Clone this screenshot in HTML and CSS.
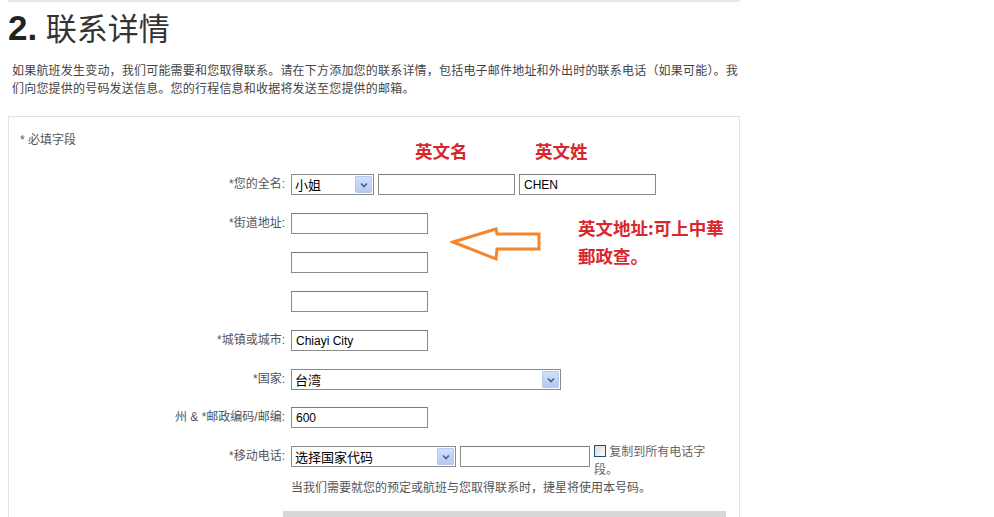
FILE: index.html
```html
<!DOCTYPE html>
<html lang="zh-CN">
<head>
  <meta charset="UTF-8">
  <title>联系详情</title>
  <link rel="stylesheet" href="styles.css">
</head>
<body>
  <div class="page">
    <h1 class="title"><b>2.</b> 联系详情</h1>
    <p class="intro">如果航班发生变动，我们可能需要和您取得联系。请在下方添加您的联系详情，包括电子邮件地址和外出时的联系电话（如果可能）。我们向您提供的号码发送信息。您的行程信息和收据将发送至您提供的邮箱。</p>

    <div class="panel">
      <p class="req">* 必填字段</p>

      <div class="row">
        <label class="lbl">*您的全名:</label>
        <div class="fields">
          <span class="sel w-title">
            <select><option>小姐</option></select>
            <span class="sel-btn"><svg width="8" height="6" viewBox="0 0 8 6"><path d="M1 1.5 L4 4.5 L7 1.5" fill="none" stroke="#4a5f86" stroke-width="1.6"/></svg></span>
          </span>
          <input class="txt" type="text" value="">
          <input class="txt" type="text" value="CHEN">
        </div>
      </div>

      <div class="row">
        <label class="lbl">*街道地址:</label>
        <div class="fields stack">
          <input class="txt" type="text" value="">
          <input class="txt" type="text" value="">
          <input class="txt" type="text" value="">
        </div>
      </div>

      <div class="row">
        <label class="lbl">*城镇或城市:</label>
        <div class="fields">
          <input class="txt" type="text" value="Chiayi City">
        </div>
      </div>

      <div class="row">
        <label class="lbl">*国家:</label>
        <div class="fields">
          <span class="sel w-country">
            <select><option>台湾</option></select>
            <span class="sel-btn"><svg width="8" height="6" viewBox="0 0 8 6"><path d="M1 1.5 L4 4.5 L7 1.5" fill="none" stroke="#4a5f86" stroke-width="1.6"/></svg></span>
          </span>
        </div>
      </div>

      <div class="row row-zip">
        <label class="lbl">州 &amp; *邮政编码/邮编:</label>
        <div class="fields">
          <input class="txt" type="text" value="600">
        </div>
      </div>

      <div class="row">
        <label class="lbl">*移动电话:</label>
        <div class="fields stack-tight">
          <div class="phone">
            <span class="sel w-code">
              <select><option>选择国家代码</option></select>
              <span class="sel-btn"><svg width="8" height="6" viewBox="0 0 8 6"><path d="M1 1.5 L4 4.5 L7 1.5" fill="none" stroke="#4a5f86" stroke-width="1.6"/></svg></span>
            </span>
            <input class="txt w-phone" type="text" value="">
            <span class="copy"><span class="cb"></span> 复制到所有电话字段。</span>
          </div>
          <p class="help">当我们需要就您的预定或航班与您取得联系时，捷星将使用本号码。</p>
        </div>
      </div>

      <div class="bar"></div>
    </div>

    <!-- 手写标注 -->
    <div class="note note-first">英文名</div>
    <div class="note note-last">英文姓</div>
    <div class="note note-addr">英文地址:可上中華<br>郵政查。</div>
    <svg class="arrow" width="94" height="38" viewBox="0 0 94 38">
      <path d="M3 16 L46 3 L47 8 L89 8 L89 23 L47 23 L46 33 Z" fill="none" stroke="#f6862c" stroke-width="3" stroke-linejoin="miter"/>
    </svg>
  </div>
</body>
</html>
```

FILE: styles.css
```css
/* Základ */
body {
  margin: 0 0 0 8px;
  background: #fff;
  font-family: "Liberation Sans", "Noto Sans CJK SC", sans-serif;
  font-size: 12px;
  color: #555;
}

.page {
  position: relative;
  width: 732px;
  border-top: 2px solid #e8e8e8;
}

/* Nadpis */
.title {
  margin: 0;
  padding: 6px 0 0;
  height: 40px;
  line-height: 40px;
  font-size: 31px;
  font-weight: normal;
  color: #333;
}
.title b { font-size: 35px; font-weight: bold; color: #222; }

.intro {
  margin: 14px 0 0 4px;
  width: 730px;
  line-height: 18px;
  letter-spacing: 0.2px;
  color: #444;
}

/* Panel s formulárom */
.panel {
  margin-top: 18px;
  border: 1px solid #e2e2e2;
  border-bottom: 0;
  height: 420px;
}

.req {
  margin: 0;
  padding: 14px 0 0 11px;
  line-height: 18px;
  color: #555;
}

.row {
  display: flex;
  align-items: flex-start;
  gap: 6px;
  margin-top: 18px;
}
.req + .row { margin-top: 25px; }
.row-zip { margin-top: 17px; }

.lbl {
  width: 276px;
  flex-shrink: 0;
  text-align: right;
  line-height: 21px;
  color: #555;
}

.fields {
  display: flex;
  gap: 4px;
}
.fields.stack { flex-direction: column; gap: 18px; }
.fields.stack-tight { flex-direction: column; gap: 0; }

/* Polia */
.txt {
  box-sizing: border-box;
  width: 137px;
  height: 21px;
  margin: 0;
  padding: 0 4px;
  border: 1px solid #8a8a8a;
  border-top-color: #7a7a7a;
  font-family: "Liberation Sans", "Noto Sans CJK SC", sans-serif;
  font-size: 12px;
  color: #000;
  background: #fff;
}
.txt.w-phone { width: 130px; }

.sel {
  position: relative;
  display: inline-block;
  height: 21px;
}
.sel select {
  box-sizing: border-box;
  -webkit-appearance: none;
  appearance: none;
  width: 100%;
  height: 21px;
  margin: 0;
  padding: 0 0 0 3px;
  border: 1px solid #8a8a8a;
  border-radius: 0;
  background: #fff;
  font-family: "Noto Sans CJK SC", sans-serif;
  font-size: 13px;
  color: #000;
}
.sel-btn {
  position: absolute;
  top: 2px;
  right: 2px;
  width: 15px;
  height: 15px;
  border: 1px solid #b8c9f0;
  border-radius: 1px;
  background: linear-gradient(#d3e0fb, #b6c9f3);
  display: flex;
  align-items: center;
  justify-content: center;
  pointer-events: none;
}
.w-title { width: 83px; }
.w-country { width: 270px; }
.w-code { width: 165px; }

/* Telefón */
.phone {
  display: flex;
  align-items: flex-start;
  gap: 4px;
}
.copy {
  display: inline-block;
  width: 116px;
  margin-top: -3px;
  line-height: 18px;
  color: #666;
}
.cb {
  display: inline-block;
  box-sizing: border-box;
  width: 12px;
  height: 12px;
  border: 1px solid #1c5180;
  background: linear-gradient(135deg, #dcdcd7, #fbfbfa);
  vertical-align: -1px;
}

.help {
  margin: 0;
  line-height: 18px;
  color: #555;
}

.bar {
  margin: 14px 0 0 274px;
  width: 443px;
  height: 10px;
  background: #d8d8d8;
}

/* Červené poznámky */
.note {
  position: absolute;
  font-family: "Noto Sans CJK SC", sans-serif;
  font-size: 17.5px;
  font-weight: bold;
  line-height: 28px;
  color: #d8262c;
}
.note-first { left: 407px; top: 135px; }
.note-last { left: 527px; top: 135px; }
.note-addr { left: 570px; top: 212px; }

.arrow {
  position: absolute;
  left: 442px;
  top: 224px;
}
```
